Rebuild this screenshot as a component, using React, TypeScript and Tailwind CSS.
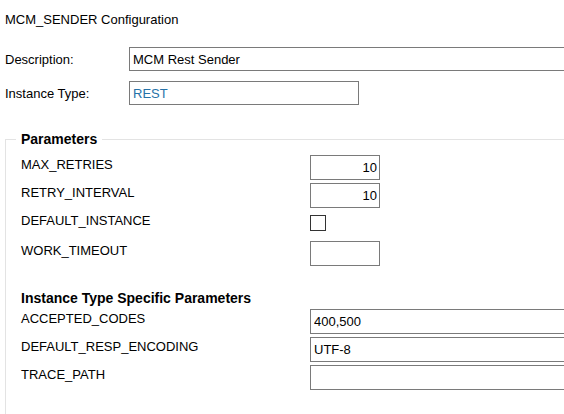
import React from "react";

const paramRows = [
  { name: "MAX_RETRIES", value: "10" },
  { name: "RETRY_INTERVAL", value: "10" },
  { name: "DEFAULT_INSTANCE", checkbox: true },
  { name: "WORK_TIMEOUT", value: "" },
];

const specificRows = [
  { name: "ACCEPTED_CODES", value: "400,500" },
  { name: "DEFAULT_RESP_ENCODING", value: "UTF-8" },
  { name: "TRACE_PATH", value: "" },
];

function Box({ value, className }: { value: string; className: string }) {
  return (
    <input
      readOnly
      value={value}
      className={`h-[25px] border border-[#7a7a7a] bg-white px-[3px] text-[13px] text-black outline-none ${className}`}
    />
  );
}

export default function App() {
  return (
    <div className="flex h-[414px] w-[564px] flex-col overflow-hidden bg-white font-['Liberation_Sans',Arial,sans-serif] text-[13px] leading-[15px] text-black">
      <div className="mt-[12px] pl-[5px]">MCM_SENDER Configuration</div>

      {/* header fields */}
      <div className="mt-[20px] flex h-[24px] items-center pl-[5px]">
        <span className="w-[124px] shrink-0">Description:</span>
        <input
          readOnly
          value="MCM Rest Sender"
          className="h-[24px] w-[460px] shrink-0 border border-[#7a7a7a] px-[3px] text-[13px] outline-none"
        />
      </div>
      <div className="mt-[10px] flex h-[24px] items-center pl-[5px]">
        <span className="w-[124px] shrink-0">Instance Type:</span>
        <input
          readOnly
          value="REST"
          className="h-[24px] w-[230px] shrink-0 border border-[#7a7a7a] px-[3px] text-[13px] text-[#2672a8] outline-none"
        />
      </div>

      {/* parameters */}
      <fieldset className="ml-[5px] mt-[27px] flex-1 border-l border-t border-[#e3e3e3] pl-[10px]">
        <legend className="px-[5px] text-[14px] font-bold leading-[15px]">Parameters</legend>

        <div className="mt-[8px] flex flex-col pl-[5px]">
          {paramRows.map((r, i) => (
            <div
              key={r.name}
              className={`grid grid-cols-[289px_1fr] items-start ${i === 2 ? "h-[30px]" : "h-[28px]"}`}
            >
              <span className="pt-[2px]">{r.name}</span>
              {r.checkbox ? (
                <div className="mt-[4px] h-[16px] w-[16px] border border-[#333]" />
              ) : (
                <Box value={r.value ?? ""} className="w-[70px] text-right pr-[2px]" />
              )}
            </div>
          ))}

          <div className="mt-[22px] text-[14px] font-bold">Instance Type Specific Parameters</div>

          <div className="mt-[3px] flex flex-col">
            {specificRows.map((r) => (
              <div key={r.name} className="grid h-[28px] grid-cols-[289px_1fr] items-start">
                <span className="pt-[2px]">{r.name}</span>
                <Box value={r.value} className="w-[300px]" />
              </div>
            ))}
          </div>
        </div>
      </fieldset>
    </div>
  );
}
